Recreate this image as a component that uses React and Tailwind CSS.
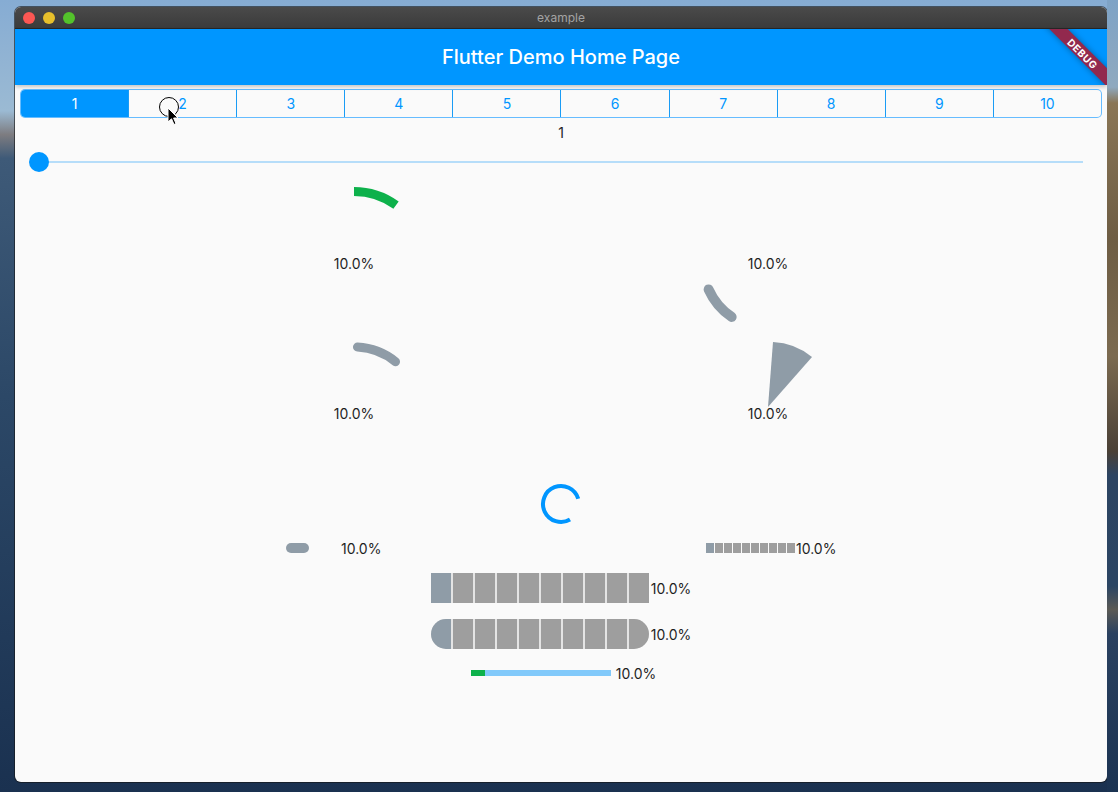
import React from 'react';

const BLUE = '#0096ff';
const GRAY = '#8f9ca7';
const BAR = '#9e9e9e';
const GREEN = '#0db14b';

const font = { fontFamily: 'Inter, "Noto Sans", sans-serif' };

function Label({ className = '' }) {
  return <span className={`text-[14px] leading-4 pt-px text-[#1f1f1f] whitespace-nowrap ${className}`}>10.0%</span>;
}

function ChartCell({ children }) {
  return (
    <div className="relative h-[150px] flex items-center justify-center">
      <svg className="absolute left-0 top-0 overflow-visible" width="414" height="150" viewBox="0 0 414 150">
        {children}
      </svg>
      <Label className="relative" />
    </div>
  );
}

function Segments({ size, gap, height, rounded }) {
  return (
    <div
      className={`flex bg-[#e4e4e4] ${rounded ? 'rounded-full overflow-hidden' : ''}`}
      style={{ gap, height }}
    >
      {Array.from({ length: 10 }).map((_, i) => (
        <div key={i} style={{ width: size, background: i === 0 ? GRAY : BAR }} />
      ))}
    </div>
  );
}

export default function App() {
  const tabs = ['1', '2', '3', '4', '5', '6', '7', '8', '9', '10'];

  return (
    <div
      className="relative w-[1118px] h-[792px] flex overflow-hidden bg-[linear-gradient(180deg,#86acd3_0%,#9bbad3_14%,#7d7c80_17%,#3e5a78_20%,#2c4867_50%,#1a3150_100%)]"
      style={font}
    >
      <div className="w-[15px] shrink-0" />

      <div className="w-[1092px] shrink-0 pt-[7px] pb-[10px] flex flex-col">
        <div className="flex-1 flex flex-col rounded-[6px] overflow-hidden bg-[#fafafa] shadow-[0_0_0_1px_rgba(20,20,20,0.6)]">
          {/* title bar */}
          <div className="h-[22px] shrink-0 grid grid-cols-[1fr_auto_1fr] items-center bg-[linear-gradient(180deg,#4a4a4a,#3b3b3b)] border-b border-[#262626]">
            <div className="flex items-center gap-[8px] pl-[8px]">
              <span className="w-3 h-3 rounded-full bg-[#fc5753]" />
              <span className="w-3 h-3 rounded-full bg-[#e7bf2b]" />
              <span className="w-3 h-3 rounded-full bg-[#53c22b]" />
            </div>
            <span className="text-[12px] text-[#a3a3a3]">example</span>
            <div />
          </div>

          {/* app bar */}
          <div className="relative z-10 h-[56px] shrink-0 flex items-center justify-center bg-[#0096ff] overflow-hidden shadow-[0_2px_4px_rgba(0,0,0,0.22)]">
            <span className="text-[20px] font-medium text-white">Flutter Demo Home Page</span>
            <div className="absolute top-[18px] right-[-36px] w-[120px] h-[13px] rotate-45 bg-[#92294e] shadow-[0_0_6px_rgba(0,0,0,0.35)] flex items-center justify-center">
              <span className="text-[10px] font-bold text-white leading-none tracking-[0.6px]">DEBUG</span>
            </div>
          </div>

          {/* segmented control */}
          <div className="mx-[5px] mt-[4px] h-[29px] p-px rounded-[5px] bg-[#66bcff]">
            <div className="h-full flex rounded-[4px] overflow-hidden bg-[#fafafa]">
              {tabs.map((t, i) => (
                <React.Fragment key={t}>
                  {i > 0 && <div className="w-px shrink-0 bg-[#1a9cf5]" />}
                  <div
                    className={`flex-1 flex items-center justify-center text-[14px] ${
                      i === 0 ? 'bg-[#0096ff] text-white' : 'text-[#0096ff]'
                    }`}
                  >
                    {t}
                  </div>
                </React.Fragment>
              ))}
            </div>
          </div>

          <div className="mt-[6px] h-4 text-center text-[14px] leading-4 pt-px text-[#1f1f1f]">1</div>

          {/* slider */}
          <div className="relative mx-[24px] mt-[12px] h-[20px] flex items-center">
            <div className="w-full h-[2px] bg-[#b6ddf9]" />
            <div className="absolute left-[-10px] top-0 w-5 h-5 rounded-full bg-[#0096ff]" />
          </div>

          {/* radial charts */}
          <div className="w-[828px] mx-auto mt-[16px] grid grid-cols-2">
            <ChartCell>
              <path d="M207 3.5 A71.5 71.5 0 0 1 249.03 17.16" fill="none" stroke={GREEN} strokeWidth="9" />
            </ChartCell>
            <ChartCell>
              <path d="M147.62 101.44 A65 65 0 0 0 170.65 128.89" fill="none" stroke={GRAY} strokeWidth="10" strokeLinecap="round" />
            </ChartCell>
            <ChartCell>
              <path d="M210.45 9.09 A66 66 0 0 1 248.53 23.71" fill="none" stroke={GRAY} strokeWidth="9" strokeLinecap="round" />
            </ChartCell>
            <ChartCell>
              <path d="M207 69 L212 4 A66 66 0 0 1 251 19 Z" fill={GRAY} />
            </ChartCell>
          </div>

          {/* spinner */}
          <div className="h-[32px] flex items-center justify-center">
            <svg width="40" height="40" viewBox="0 0 40 40" className="overflow-visible">
              <path d="M29 35.59 A18 18 0 1 1 37.21 14.74" fill="none" stroke={BLUE} strokeWidth="4" />
            </svg>
          </div>

          {/* small bars */}
          <div className="mt-[20px] h-4 flex items-center">
            <div className="ml-[271px] w-[23px] h-[10px] rounded-full" style={{ background: GRAY }} />
            <Label className="ml-[32px] w-[40px]" />
            <div className="ml-[325px] flex items-center">
              <div className="flex gap-px h-[10px]">
                {Array.from({ length: 10 }).map((_, i) => (
                  <div key={i} className="w-[8px]" style={{ background: i === 0 ? GRAY : BAR }} />
                ))}
              </div>
              <Label className="ml-px" />
            </div>
          </div>

          {/* big segmented bars */}
          <div className="mt-[17px] flex justify-center items-center">
            <Segments size={20} gap={2} height={30} />
            <Label className="ml-[2px]" />
          </div>
          <div className="mt-[16px] flex justify-center items-center">
            <Segments size={20} gap={2} height={30} rounded />
            <Label className="ml-[2px]" />
          </div>

          {/* linear */}
          <div className="mt-[16px] h-4 pl-[5px] flex justify-center items-center">
            <div className="w-[140px] h-[6px] flex">
              <div className="w-[14px] bg-[#0db14b]" />
              <div className="flex-1 bg-[#81c9fa]" />
            </div>
            <Label className="ml-[5px]" />
          </div>
        </div>
      </div>

      <div className="w-[11px] shrink-0 bg-[linear-gradient(180deg,#7ea3c6_0%,#8fa9bf_11%,#8a7656_13%,#6e5d44_30%,#7b6a50_45%,#4a4036_57%,#2c4462_60%,#2b4563_74%,#5b5a55_77%,#2a4160_80%,#1b3352_100%)]" />

      {/* mouse pointer over segment 2 */}
      <div className="absolute left-[159px] top-[97px] w-[20px] h-[20px] rounded-full border border-black" />
      <svg className="absolute left-[167px] top-[107px]" width="12" height="19" viewBox="0 0 12 19">
        <path d="M1 1 L1 15 L4.5 11.8 L7 17.5 L9 16.6 L6.6 11 L11 11 Z" fill="#000" stroke="#fff" strokeWidth="1" strokeLinejoin="round" />
      </svg>
    </div>
  );
}
